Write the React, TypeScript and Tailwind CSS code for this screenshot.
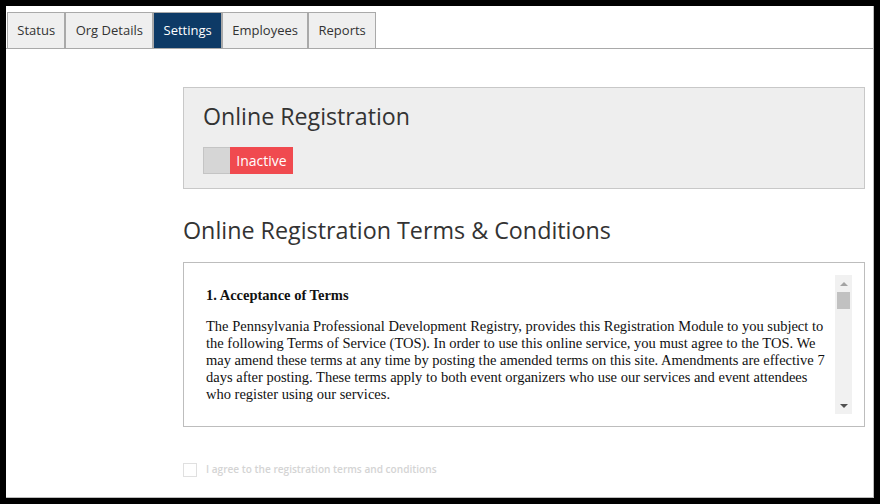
import React from "react"

const tabs = ["Status", "Org Details", "Settings", "Employees", "Reports"]

const terms =
  "The Pennsylvania Professional Development Registry, provides this Registration Module to you subject to the following Terms of Service (TOS). In order to use this online service, you must agree to the TOS. We may amend these terms at any time by posting the amended terms on this site. Amendments are effective 7 days after posting. These terms apply to both event organizers who use our services and event attendees who register using our services."

function FakeScrollbar() {
  return (
    <div className="flex w-[17px] shrink-0 flex-col items-center bg-[#f1f1f1]">
      {/* up arrow */}
      <div className="flex h-[17px] w-full items-center justify-center">
        <div className="h-0 w-0 border-x-[4px] border-b-[4px] border-x-transparent border-b-[#a3a3a3]" />
      </div>
      <div className="h-[17px] w-[13px] bg-[#c1c1c1]" />
      <div className="flex-1" />
      <div className="flex h-[17px] w-full items-center justify-center">
        <div className="h-0 w-0 border-x-[4px] border-t-[4px] border-x-transparent border-t-[#505050]" />
      </div>
    </div>
  )
}

export default function App() {
  return (
    <div className="h-[504px] w-[880px] border-[6px] border-black bg-white">
      <div className="flex h-full flex-col border-b border-r border-[#bdbdbd] font-['Open_Sans',sans-serif]">
        {/* Tab bar */}
        <div className="mt-[6px] flex border-b border-[#a9a9a9] pl-px">
          {tabs.map((tab) => (
            <div
              key={tab}
              className={
                tab === "Settings"
                  ? "flex h-[36px] items-center border border-b-0 border-[#a9a9a9] bg-[#0d3a66] px-[9.3px] text-[13px] text-white"
                  : "flex h-[36px] items-center border border-b-0 border-[#a9a9a9] bg-[#efefef] px-[9.3px] text-[13px] text-[#333]"
              }
            >
              {tab}
            </div>
          ))}
        </div>

        <div className="flex flex-col pl-[177px] pr-[8px]">
          {/* Online Registration card */}
          <div className="mt-[38px] h-[102px] border border-[#c8c8c8] bg-[#eeeeee] px-[19px] pt-[12px]">
            <h2 className="text-[23.2px] leading-[32px] text-[#333]">Online Registration</h2>
            <div className="mt-[15px] flex h-[27px]">
              <div className="w-[27px] border border-r-0 border-[#c4c4c4] bg-[#d6d6d6]" />
              <div className="flex w-[63px] items-center justify-center bg-[#f04a4f] text-[14px] text-white">
                Inactive
              </div>
            </div>
          </div>

          {/* Terms heading */}
          <h2 className="mt-[25px] text-[23.3px] leading-[32px] text-[#333]">
            Online Registration Terms &amp; Conditions
          </h2>

          {/* Terms box */}
          <div className="mt-[16px] flex h-[165px] border border-[#bdbdbd] bg-white p-[12px]">
            <div className="flex-1 overflow-hidden pl-[10px] pr-[4px] pt-[12px] font-['Liberation_Serif',serif] text-[14.5px] leading-[17px] text-[#111]">
              <p className="font-bold">1. Acceptance of Terms</p>
              <p className="mt-[14px]">{terms}</p>
            </div>
            <FakeScrollbar />
          </div>

          {/* Agree checkbox */}
          <label className="mt-[35px] flex items-center gap-[9px]">
            <span className="h-[14px] w-[14px] border border-[#e0e0e0] bg-white" />
            <span className="text-[10.1px] font-semibold text-[#d4d4d4]">
              I agree to the registration terms and conditions
            </span>
          </label>
        </div>
      </div>
    </div>
  )
}
